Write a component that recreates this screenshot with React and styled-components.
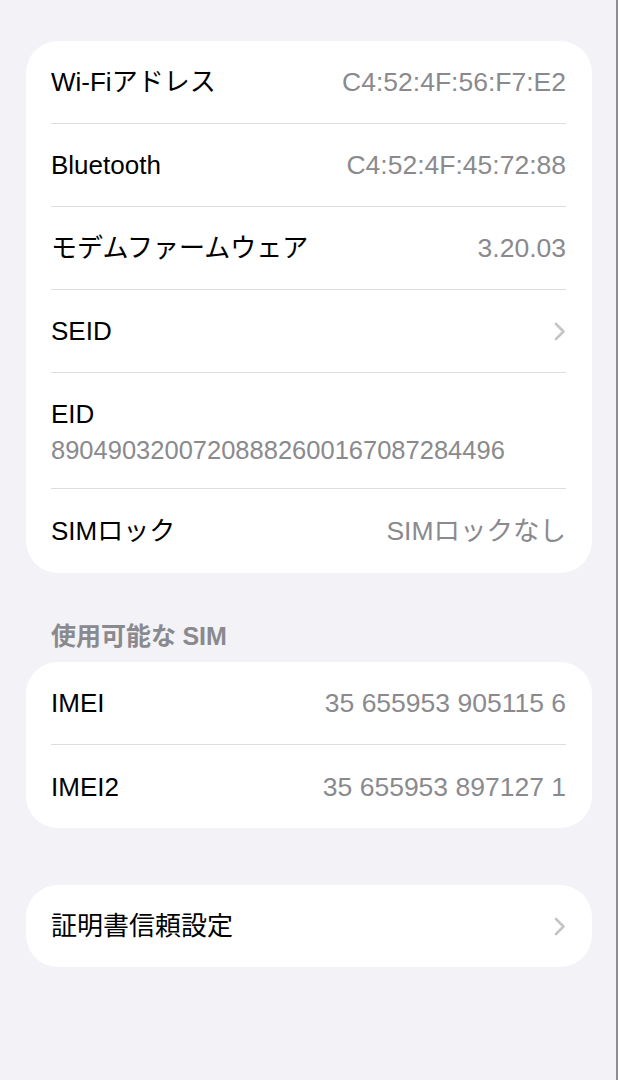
import styled, { createGlobalStyle } from "styled-components";

const GlobalStyle = createGlobalStyle`
  html, body {
    margin: 0;
    padding: 0;
    background: #f2f2f7;
  }
  body {
    font-family: "Liberation Sans", "Noto Sans CJK JP", sans-serif;
    -webkit-font-smoothing: antialiased;
  }
`;

const Page = styled.div`
  box-sizing: border-box;
  width: 618px;
  min-height: 1080px;
  padding: 41px 24px 0 26px;
  background: #f2f2f7;
  border-right: 2px solid #8e8e92;
`;

const Card = styled.div`
  background: #ffffff;
  border-radius: 32px;
  padding: 0 26px 0 25px;
  margin-bottom: ${({ $gap }) => $gap || 0}px;
`;

const Row = styled.div`
  box-sizing: border-box;
  display: flex;
  align-items: center;
  justify-content: space-between;
  height: ${({ $h }) => $h || 83}px;
  border-bottom: ${({ $last }) => ($last ? "none" : "1px solid #dedee2")};
`;

const StackRow = styled.div`
  box-sizing: border-box;
  display: flex;
  flex-direction: column;
  padding-top: 26px;
  height: 116px;
  border-bottom: 1px solid #dedee2;
`;

const Label = styled.span`
  font-size: 26px;
  line-height: 30px;
  color: #000000;
  white-space: nowrap;
`;

const Value = styled.span`
  font-size: ${({ $small }) => ($small ? "25.5px" : "26.5px")};
  line-height: 30px;
  color: #8a8a8e;
  white-space: nowrap;
  margin-top: ${({ $small }) => ($small ? "6px" : "0")};
`;

const SectionHeader = styled.div`
  padding: 48px 25px 11px 25px;
  font-size: 25px;
  line-height: 30px;
  font-weight: 700;
  color: #8a8a8e;
  font-feature-settings: "palt";
`;

const Chevron = () => (
  <svg width="12" height="19" viewBox="0 0 12 19" fill="none">
    <path
      d="M2 2 L9.5 9.5 L2 17"
      stroke="#c4c4c7"
      strokeWidth="2.6"
      strokeLinecap="round"
      strokeLinejoin="round"
    />
  </svg>
);

const info = [
  { label: "Wi-Fiアドレス", value: "C4:52:4F:56:F7:E2" },
  { label: "Bluetooth", value: "C4:52:4F:45:72:88" },
  { label: "モデムファームウェア", value: "3.20.03" },
  { label: "SEID", chevron: true },
];

export default function App() {
  return (
    <>
      <GlobalStyle />
      <Page>
        <Card>
          {info.map((item) => (
            <Row key={item.label}>
              <Label>{item.label}</Label>
              {item.chevron ? <Chevron /> : <Value>{item.value}</Value>}
            </Row>
          ))}
          <StackRow>
            <Label>EID</Label>
            <Value $small>89049032007208882600167087284496</Value>
          </StackRow>
          <Row $h={84} $last>
            <Label>SIMロック</Label>
            <Value>SIMロックなし</Value>
          </Row>
        </Card>

        <SectionHeader>使用可能な SIM</SectionHeader>
        <Card $gap={57}>
          <Row>
            <Label>IMEI</Label>
            <Value>35 655953 905115 6</Value>
          </Row>
          <Row $last>
            <Label>IMEI2</Label>
            <Value>35 655953 897127 1</Value>
          </Row>
        </Card>

        <Card>
          <Row $h={82} $last>
            <Label>証明書信頼設定</Label>
            <Chevron />
          </Row>
        </Card>
      </Page>
    </>
  );
}
